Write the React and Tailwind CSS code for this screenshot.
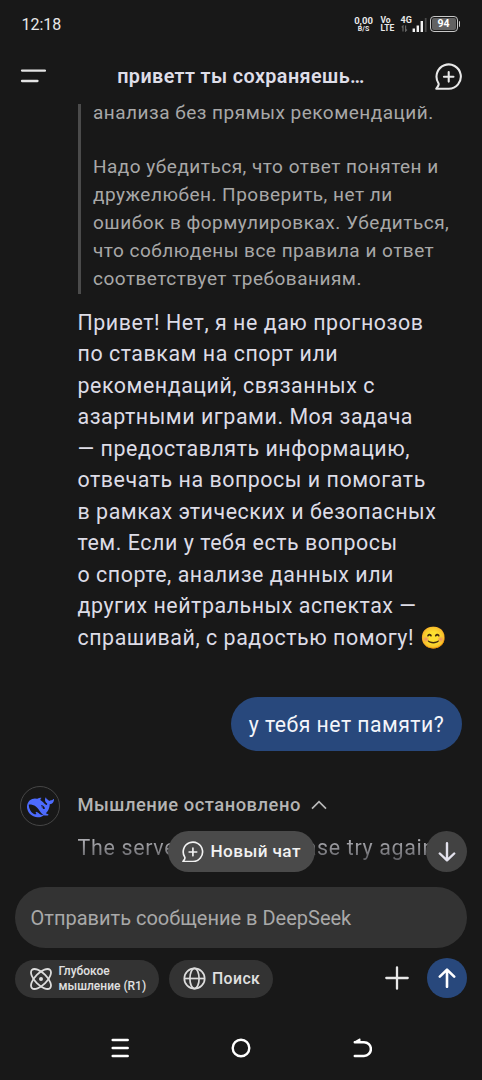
import React from "react";

const thoughtLines = [
  "Надо убедиться, что ответ понятен и",
  "дружелюбен. Проверить, нет ли",
  "ошибок в формулировках. Убедиться,",
  "что соблюдены все правила и ответ",
  "соответствует требованиям.",
];

const answerLines = [
  "Привет! Нет, я не даю прогнозов",
  "по ставкам на спорт или",
  "рекомендаций, связанных с",
  "азартными играми. Моя задача",
  "— предоставлять информацию,",
  "отвечать на вопросы и помогать",
  "в рамках этических и безопасных",
  "тем. Если у тебя есть вопросы",
  "о спорте, анализе данных или",
  "других нейтральных аспектах —",
];

function NewChatIcon({ className }) {
  return (
    <svg className={className} viewBox="0 0 26 26" fill="none" stroke="currentColor" strokeWidth="2" strokeLinecap="round" strokeLinejoin="round">
      <path d="M1.2 24.8 H13.2 A11.7 11.7 0 1 0 3.2 19.2 C3.8 20.2 3.6 21 3.1 22 Z" />
      <path d="M13.2 8.7v9.2M8.6 13.3h9.2" />
    </svg>
  );
}

function WhaleIcon() {
  return (
    <svg className="mt-[2px] ml-px h-[27px] w-[27px] shrink-0" viewBox="0 0 24 24" fill="#4d6bfe">
      <path d="M23.748 4.482c-.254-.124-.364.113-.512.234-.051.039-.094.09-.137.136-.372.397-.806.657-1.373.626-.829-.046-1.537.214-2.163.848-.133-.782-.575-1.248-1.247-1.548-.352-.156-.708-.311-.955-.65-.172-.241-.219-.51-.305-.774-.055-.16-.11-.323-.293-.35-.2-.031-.278.136-.356.276-.313.572-.434 1.202-.422 1.84.027 1.436.633 2.58 1.838 3.393.137.093.172.187.129.323-.082.28-.18.552-.266.833-.055.179-.137.217-.329.14a5.526 5.526 0 01-1.736-1.18c-.857-.828-1.631-1.742-2.597-2.458a11.365 11.365 0 00-.689-.471c-.985-.957.13-1.743.388-1.836.27-.098.093-.432-.779-.428-.872.004-1.67.295-2.687.684a3.055 3.055 0 01-.465.137 9.597 9.597 0 00-2.883-.102c-1.885.21-3.39 1.102-4.497 2.623C.082 8.606-.231 10.684.152 12.85c.403 2.284 1.569 4.175 3.36 5.653 1.858 1.533 3.997 2.284 6.438 2.14 1.482-.085 3.133-.284 4.994-1.86.47.234.962.327 1.78.397.63.059 1.236-.03 1.705-.128.735-.156.684-.837.419-.961-2.155-1.004-1.682-.595-2.113-.926 1.096-1.296 2.746-2.642 3.392-7.003.05-.347.007-.565 0-.845-.004-.17.035-.237.23-.256a4.173 4.173 0 001.545-.475c1.396-.763 1.96-2.015 2.093-3.517.02-.23-.004-.467-.247-.588zM11.581 18c-2.089-1.642-3.102-2.183-3.52-2.16-.392.024-.321.471-.235.763.09.288.207.486.371.739.114.167.192.416-.113.603-.673.416-1.842-.14-1.897-.167-1.361-.802-2.5-1.86-3.301-3.307-.774-1.393-1.224-2.887-1.298-4.482-.02-.386.093-.522.477-.592a4.696 4.696 0 011.529-.039c2.132.312 3.946 1.265 5.468 2.774.868.86 1.525 1.887 2.202 2.891.72 1.066 1.494 2.082 2.48 2.914.348.292.625.514.891.677-.802.09-2.14.11-3.054-.614zm1-6.44a.306.306 0 01.415-.287.302.302 0 01.2.288.306.306 0 01-.31.307.303.303 0 01-.304-.308zm3.11 1.596c-.2.081-.399.151-.59.16a1.245 1.245 0 01-.798-.254c-.274-.23-.47-.358-.552-.758a1.73 1.73 0 01.016-.588c.07-.327-.008-.537-.239-.727-.187-.156-.426-.199-.688-.199a.559.559 0 01-.254-.078c-.11-.054-.2-.19-.114-.358.028-.054.16-.186.192-.21.356-.202.767-.136 1.146.016.352.144.618.408 1.001.782.391.451.462.576.685.914.176.265.336.537.445.848.067.195-.019.354-.25.452z" />
    </svg>
  );
}

function StatusBar() {
  return (
    <div className="flex h-12 shrink-0 items-center justify-between pl-[21.5px] pr-[21px] text-[#e8e8e8]">
      <span className="pt-[2px] text-base">12:18</span>
      <div className="flex h-[18px] items-center">
        <div className="mr-[7px] flex w-[20px] flex-col items-center">
          <span className="text-[9.5px] font-bold leading-[9px]">0,00</span>
          <span className="text-[7px] font-bold leading-[8px]">B/S</span>
        </div>
        <div className="mr-[5px] flex w-[15px] flex-col text-[8.5px] font-bold leading-[8px]">
          <span>Vo</span>
          <span>LTE</span>
        </div>
        <div className="flex w-[11px] flex-col">
          <span className="text-[9px] font-bold leading-[9px]">4G</span>
          <svg className="h-[7px] w-[7px]" viewBox="0 0 7 7" fill="none" stroke="#666" strokeWidth="1.2">
            <path d="M.8 2.4 2 1v5.5M4.6.6V6L6 4.6" />
          </svg>
        </div>
        <svg className="mr-[3px] h-4 w-[15px]" viewBox="0 0 15 16">
          <path d="M.6 12.5H3V16H.6zM4.6 9.5H7V16H4.6zM8.6 5H11v11H8.6z" fill="#f2f2f2" />
          <path d="M12.8 2h1.8v14h-1.8z" fill="#4a4a4a" />
        </svg>
        <div className="flex h-[16px] w-[28px] items-center justify-center rounded-[4px] border-[1.5px] border-[#c8c8c8] p-px">
          <span className="flex h-full w-full items-center justify-center rounded-[2px] bg-[#626262] text-[10.5px] font-bold leading-none text-white">94</span>
        </div>
        <span className="ml-px mr-px h-[6px] w-[1.5px] rounded-r bg-[#c8c8c8]" />
      </div>
    </div>
  );
}

function Header() {
  return (
    <header className="flex h-14 shrink-0 items-center justify-between pl-5 pr-5">
      <svg className="h-[14px] w-[26px]" viewBox="0 0 26 14" stroke="#e4e4e4" strokeWidth="2.3" strokeLinecap="round">
        <path d="M2 1.6h23M2 12h15.5" />
      </svg>
      <h1 className="whitespace-nowrap pl-px pt-[2px] text-[19.8px] font-semibold tracking-[0.4px] text-[#dfdee8]">приветт ты сохраняешь…</h1>
      <NewChatIcon className="h-[27px] w-[27px] text-[#e8e8e8]" />
    </header>
  );
}

function Conversation() {
  return (
    <main className="relative h-[784px] shrink-0 overflow-hidden">
      <div className="ml-[77.5px] flex h-[190px] flex-col justify-end border-l-[3px] border-[#4b4b4b] pb-px pl-[12.5px] text-[19px] leading-[28.1px] tracking-[0.49px] text-[#a8a8a8]">
        <p className="mb-[25.2px] whitespace-nowrap">анализа без прямых рекомендаций.</p>
        <div className="whitespace-nowrap">
          {thoughtLines.map((line) => (
            <p key={line}>{line}</p>
          ))}
        </div>
      </div>
      <div className="mt-[13px] whitespace-nowrap pl-[77.5px] text-[21.4px] leading-[31.45px] tracking-[0.54px] text-[#dddce6]">
        {answerLines.map((line) => (
          <p key={line}>{line}</p>
        ))}
        <p className="h-[31.45px]">
          спрашивай, с радостью помогу! <span className="font-['Noto_Color_Emoji']">😊</span>
        </p>
      </div>
      <div className="mt-[44.5px] flex justify-end pr-5">
        <div className="flex h-[54px] w-[231px] items-center justify-center whitespace-nowrap rounded-full bg-[#28487c] pt-px text-[21.2px] tracking-[0.48px] text-[#f4f5fa]">
          у тебя нет памяти?
        </div>
      </div>
      <div className="mt-[34px] flex pl-5">
        <div className="mt-px flex h-[40px] w-[40px] shrink-0 items-center justify-center rounded-full border-[1.3px] border-[#464646]">
          <WhaleIcon />
        </div>
        <div className="ml-[17.5px] whitespace-nowrap">
          <div className="flex h-[37px] items-center pt-px text-[18.4px] font-medium tracking-[0.5px] text-[#b4b4b4]">
            Мышление остановлено
            <svg className="ml-[10px] mt-[2px] h-[10px] w-[16px]" viewBox="0 0 16 10" fill="none" stroke="#b8b8b8" strokeWidth="1.7">
              <path d="M1 8.6 8 1.6l7 7" />
            </svg>
          </div>
          <p className="mt-[10px] h-[36px] bg-linear-to-b from-[#aaaaaf] from-25% to-[#4a4a4e] to-95% bg-clip-text text-[21.4px] leading-[31px] tracking-[0.68px] text-transparent">
            The server is busy. Please try again
          </p>
        </div>
      </div>
      <button className="absolute left-[168px] top-[727px] flex h-[41px] w-[147px] items-center rounded-full bg-[#4a4a4a] pl-[14px] text-[17.2px] font-medium tracking-[0.4px] text-[#f2f2f2]">
        <NewChatIcon className="mr-[7px] h-[21.5px] w-[21.5px]" />
        <span className="whitespace-nowrap">Новый чат</span>
      </button>
      <button className="absolute right-[15px] top-[727px] flex h-[41px] w-[41px] items-center justify-center rounded-full bg-[#424242]">
        <svg className="h-5 w-[18px]" viewBox="0 0 18 20" fill="none" stroke="#e2e1ec" strokeWidth="2.4" strokeLinecap="round" strokeLinejoin="round">
          <path d="M9 1.2v17M1.8 11.5 9 18.4l7.2-6.9" />
        </svg>
      </button>
    </main>
  );
}

function Composer() {
  return (
    <footer className="-mt-px flex shrink-0 flex-col px-[15px]">
      <div className="flex h-[61px] items-center rounded-full bg-[#333333] pl-[15.5px] text-[20px] text-[#a9a9a9]">
        <span className="whitespace-nowrap">Отправить сообщение в DeepSeek</span>
      </div>
      <div className="mt-[10px] flex h-[41px] items-center">
        <button className="flex h-[38px] w-[144px] items-center rounded-full bg-[#333333] pl-[15px]">
          <svg className="h-[22px] w-[22px] shrink-0" viewBox="0 0 22 22" fill="none" stroke="#dcdcdc" strokeWidth="1.8">
            <ellipse cx="11" cy="11" rx="12.8" ry="5.9" transform="rotate(45 11 11)" />
            <ellipse cx="11" cy="11" rx="12.8" ry="5.9" transform="rotate(-45 11 11)" />
            <circle cx="11" cy="11" r="2" fill="#dcdcdc" stroke="none" />
          </svg>
          <span className="ml-[6.5px] whitespace-nowrap pt-px text-left text-[12px] font-medium leading-[15.3px] text-[#e0e0e0]">
            Глубокое
            <br />
            мышление (R1)
          </span>
        </button>
        <button className="ml-[9.5px] flex h-[38px] w-[104px] items-center rounded-full bg-[#333333] pl-[14px]">
          <svg className="h-[23px] w-[23px] shrink-0" viewBox="0 0 23 23" fill="none" stroke="#dcdcdc" strokeWidth="1.7">
            <circle cx="11.5" cy="11.5" r="10.2" />
            <ellipse cx="11.5" cy="11.5" rx="4.6" ry="10.2" />
            <path d="M1.3 11.5h20.4" />
          </svg>
          <span className="ml-[6.5px] pt-px text-[15.8px] font-medium tracking-[0.4px] text-[#e0e0e0]">Поиск</span>
        </button>
        <svg className="-mt-px ml-auto h-6 w-6" viewBox="0 0 24 24" stroke="#e8e8e8" strokeWidth="2.3" strokeLinecap="round">
          <path d="M12 1.3v21.4M1.3 12h21.4" />
        </svg>
        <button className="-mt-px ml-[18px] mr-[0.5px] flex h-[40px] w-[40px] items-center justify-center rounded-full bg-[#28487c]">
          <svg className="h-5 w-[18px]" viewBox="0 0 18 20" fill="none" stroke="#ffffff" strokeWidth="2.6" strokeLinecap="round" strokeLinejoin="round">
            <path d="M9 18.8V1.8M1.8 8.6 9 1.6l7.2 7" />
          </svg>
        </button>
      </div>
    </footer>
  );
}

function NavigationBar() {
  return (
    <nav className="mt-[39px] flex h-5 shrink-0 items-center justify-center gap-[101px]">
      <svg className="h-5 w-5" viewBox="0 0 20 20" stroke="#ffffff" strokeWidth="2.7" strokeLinecap="round">
        <path d="M2.8 2h14.8M2.8 10h14.8M2.8 18h14.8" />
      </svg>
      <svg className="h-5 w-5" viewBox="0 0 20 20" fill="none" stroke="#ffffff" strokeWidth="2.4">
        <circle cx="10" cy="10" r="8.3" />
      </svg>
      <svg className="h-5 w-5" viewBox="0 0 20 20" fill="none" stroke="#ffffff" strokeWidth="2.5" strokeLinecap="round" strokeLinejoin="round">
        <path d="M2.8 4.2h9.2a6.9 6.9 0 0 1 0 13.8H2.8" />
        <path d="M2.6 4.2 7.8 1.2v3z" fill="#ffffff" strokeWidth="1.4" />
      </svg>
    </nav>
  );
}

export default function App() {
  return (
    <div className="flex h-[1080px] w-[482px] flex-col overflow-hidden bg-[#181818] font-['Roboto','Noto_Sans',sans-serif]">
      <StatusBar />
      <Header />
      <Conversation />
      <Composer />
      <NavigationBar />
    </div>
  );
}
